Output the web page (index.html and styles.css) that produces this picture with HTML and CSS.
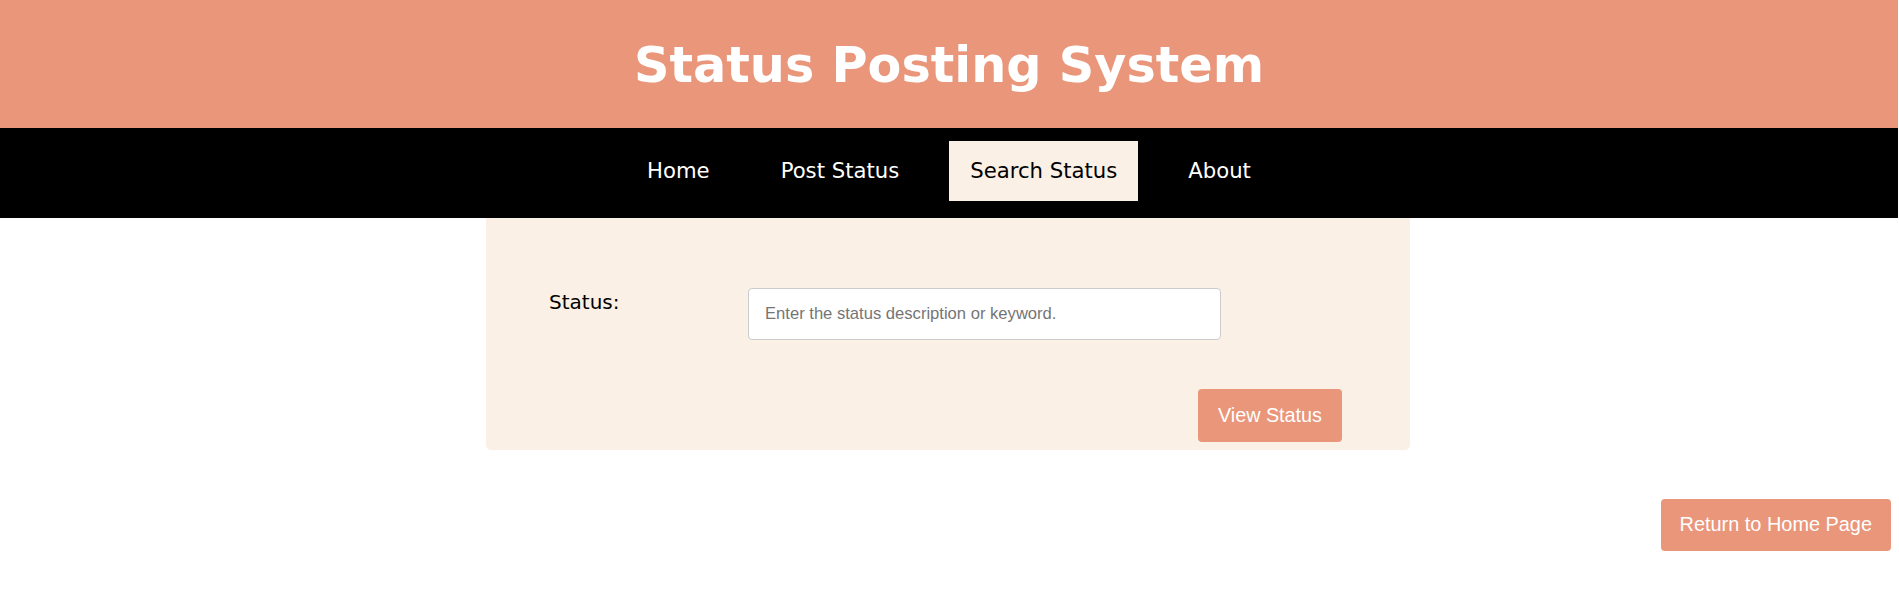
FILE: index.html
```html
<!DOCTYPE html>
<html lang="en">
<head>
<meta charset="utf-8">
<title>Search Status</title>
<link rel="stylesheet" href="styles.css">
</head>
<body>
<header class="site-header">
  <h1 class="site-title">Status Posting System</h1>
</header>
<nav class="site-nav">
  <ul class="nav-list">
    <li><a class="nav-link" href="#">Home</a></li>
    <li><a class="nav-link" href="#">Post Status</a></li>
    <li><a class="nav-link active" href="#">Search Status</a></li>
    <li><a class="nav-link" href="#">About</a></li>
  </ul>
</nav>
<main class="content">
  <form class="search-card">
    <div class="form-row">
      <label class="form-label" for="status">Status:</label>
      <input class="form-input" id="status" type="text" placeholder="Enter the status description or keyword.">
    </div>
    <div class="form-actions">
      <button class="btn" type="button">View Status</button>
    </div>
  </form>
  <div class="return-row">
    <a class="btn btn-return" href="#">Return to Home Page</a>
  </div>
</main>
</body>
</html>
```
FILE: styles.css
```css
* { box-sizing: border-box; }

body {
  margin: 0;
  font-family: "DejaVu Sans", Verdana, sans-serif;
  background: #ffffff;
}

.site-header {
  background: #e9967a;
  height: 128px;
  padding-top: 36px;
  margin-right: 1px;
}

.site-title {
  margin: 0;
  text-align: center;
  color: #ffffff;
  font-size: 49.3px;
  font-weight: bold;
  line-height: 58px;
}

.site-nav {
  background: #000000;
  height: 90px;
  padding-top: 13px;
  margin-right: 1px;
}

.nav-list {
  list-style: none;
  margin: 0;
  padding: 0;
  display: flex;
  justify-content: center;
  gap: 29px;
}

.nav-link {
  display: block;
  height: 60px;
  padding: 0 21px;
  line-height: 60px;
  font-size: 21.2px;
  color: #ffffff;
  text-decoration: none;
}

.nav-link.active {
  background: #faf0e6;
  color: #000000;
}

.content {
  padding-right: 3px;
}

.search-card {
  width: 924px;
  margin: 0 auto;
  background: #faf0e6;
  border-radius: 0 0 5px 5px;
  padding: 70px 68px 8px 63px;
}

.form-row {
  display: flex;
  align-items: flex-start;
}

.form-label {
  width: 199px;
  font-size: 20px;
  color: #000000;
  padding-top: 2px;
}

.form-input {
  width: 473px;
  height: 52px;
  margin: 0;
  border: 1px solid #cccccc;
  border-radius: 4px;
  padding: 0 16px;
  font-family: "Liberation Sans", Arial, sans-serif;
  font-size: 16.6px;
  background: #ffffff;
}

.form-input::placeholder {
  color: #757575;
}

.form-actions {
  display: flex;
  justify-content: flex-end;
  margin-top: 49px;
}

.btn {
  display: inline-block;
  background: #e9967a;
  color: #ffffff;
  border: none;
  border-radius: 4px;
  font-family: "Liberation Sans", Arial, sans-serif;
  font-size: 19.8px;
  line-height: 23px;
  padding: 15px 20px;
  text-decoration: none;
  cursor: pointer;
}

.return-row {
  display: flex;
  justify-content: flex-end;
  margin-top: 49px;
  padding-right: 5px;
}

.btn-return {
  font-size: 19.9px;
  padding: 14px 19px 15px;
}
```
